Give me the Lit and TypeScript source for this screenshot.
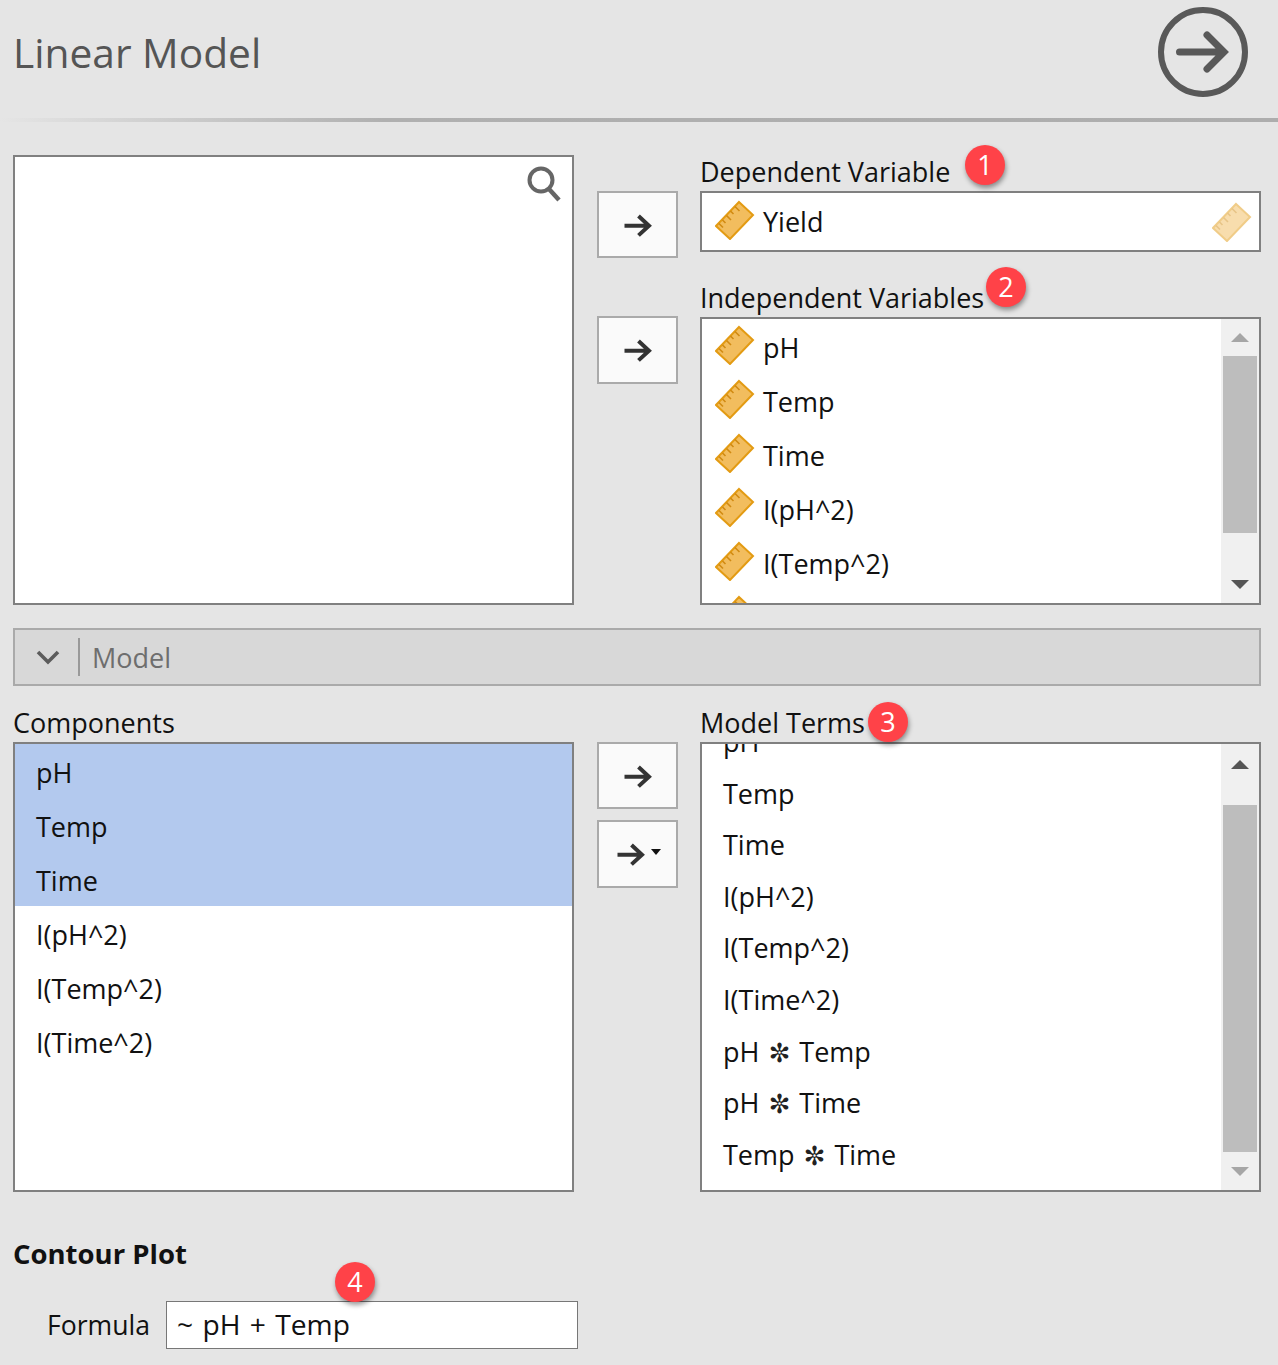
import { LitElement, css, html, svg } from 'lit';
import { customElement } from 'lit/decorators.js';

const ruler = (faded = false) => html`<svg class="ruler ${faded ? 'faded' : ''}" width="40" height="40" viewBox="0 0 40 40">
    ${svg`<path d="M24 2 L38 15 L15 39 L1 26 Z" fill="#f2bd5e" stroke="#e39b13" stroke-width="2" stroke-linejoin="miter"/>
    <path d="M20 6.5 L24.5 11 M15.5 11 L18.5 14 M11.5 15.5 L16 20 M7.5 20 L10.5 23 M4 23.5 L8 27.5" stroke="#d18a12" stroke-width="1.6" fill="none"/>`}
</svg>`;

const arrow = () => html`<svg width="30" height="24" viewBox="0 0 30 24">
    ${svg`<path d="M1.5 12.7 H26 M15.5 3 L26 12.7 L15.5 22.4" fill="none" stroke="#333" stroke-width="4" stroke-linejoin="miter"/>`}
</svg>`;

interface Bar {
    upH: number;
    gap: number;
    thumb: number;
    upDark: boolean;
}

@customElement('app-root')
export class AppRoot extends LitElement {
    static styles = css`
        :host {
            display: block;
            width: 1278px;
            height: 1365px;
            background: #e5e5e5;
            font-family: 'Open Sans', 'DejaVu Sans', sans-serif;
            font-size: 27px;
            color: #111;
            overflow: hidden;
        }

        .header {
            height: 118px;
            display: flex;
            align-items: center;
            justify-content: space-between;
            padding: 0 29px 14px 13px;
            box-sizing: border-box;
        }

        .title {
            font-size: 40.7px;
            color: #555;
        }

        .rule {
            height: 4px;
            background: linear-gradient(90deg, #e5e5e5 0, #b0b0b0 30%, #adadad 100%);
        }

        .grid {
            display: grid;
            grid-template-columns: 561px 126px 561px;
            padding-left: 13px;
        }

        .top {
            margin-top: 33px;
            height: 450px;
        }

        .box {
            background: #fff;
            border: 2px solid #808080;
            box-sizing: border-box;
            position: relative;
            overflow: hidden;
        }

        .tall {
            height: 450px;
        }

        .search {
            position: absolute;
            right: 10px;
            top: 8px;
        }

        .mid {
            padding-left: 23px;
            display: flex;
            flex-direction: column;
        }

        .btn {
            width: 81px;
            height: 67px;
            box-sizing: border-box;
            background: #fafafa;
            border: 2px solid #aaa;
            display: flex;
            align-items: center;
            justify-content: center;
        }

        .btn.second {
            height: 68px;
        }

        .btn .caret {
            width: 0;
            height: 0;
            border-left: 5px solid transparent;
            border-right: 5px solid transparent;
            border-top: 6px solid #111;
            margin: -4px -2px 0 5px;
        }

        .label {
            display: flex;
            align-items: flex-end;
            height: 36px;
            line-height: 36px;
            padding-bottom: 1px;
            box-sizing: border-box;
            position: relative;
        }

        .badge {
            position: absolute;
            width: 40px;
            height: 40px;
            border-radius: 50%;
            background: #ff4248;
            color: #fff;
            font-size: 27px;
            line-height: 39px;
            text-align: center;
            box-shadow: 1px 3px 5px rgba(0, 0, 0, 0.4);
            z-index: 2;
        }

        .single {
            height: 61px;
            display: flex;
            align-items: center;
            justify-content: space-between;
            padding: 0 7px 0 13px;
        }

        .row {
            display: flex;
            align-items: center;
            gap: 8px;
        }

        .row .ruler {
            margin-bottom: 4px;
        }

        .faded {
            opacity: 0.5;
        }

        .ind {
            height: 288px;
            display: flex;
        }

        .items {
            flex: 1;
            overflow: hidden;
        }

        .ind .items {
            padding: 1px 0 0 13px;
        }

        .ind .row {
            height: 54px;
            flex-shrink: 0;
        }

        .scroll {
            width: 38px;
            background: #f0f0f0;
            display: flex;
            flex-direction: column;
            align-items: center;
            flex-shrink: 0;
        }

        .up,
        .down {
            width: 100%;
            display: flex;
            align-items: center;
            justify-content: center;
            flex-shrink: 0;
        }

        .down {
            margin-top: auto;
            height: 38px;
        }

        .tri-up {
            border-left: 9px solid transparent;
            border-right: 9px solid transparent;
            border-bottom: 9px solid #a6a6a6;
        }

        .tri-down {
            border-left: 9px solid transparent;
            border-right: 9px solid transparent;
            border-top: 9px solid #a6a6a6;
        }

        .tri-up.dark {
            border-bottom-color: #555;
        }

        .tri-down.dark {
            border-top-color: #555;
        }

        .thumb {
            width: 34px;
            background: #bdbdbd;
            flex-shrink: 0;
        }

        .section {
            margin: 23px 17px 0 13px;
            height: 58px;
            box-sizing: border-box;
            background: #d8d8d8;
            border: 2px solid #aaa;
            display: flex;
            align-items: center;
            color: #6e6e6e;
        }

        .chev {
            margin-left: 21px;
        }

        .divider {
            width: 2px;
            height: 38px;
            background: #999;
            margin: 0 12px 0 18px;
        }

        .head56 {
            height: 56px;
        }

        .comp div {
            height: 54px;
            line-height: 54px;
            padding: 2px 0 0 21px;
            box-sizing: border-box;
        }

        .comp .sel {
            background: #b3c9ee;
        }

        .terms {
            display: flex;
        }

        .terms .items {
            padding-left: 21px;
        }

        .terms .items div {
            height: 51.6px;
            line-height: 51.6px;
        }

        .terms .items div:first-child {
            margin-top: -28px;
        }

        .star {
            font-family: 'DejaVu Sans', sans-serif;
            font-size: 26px;
            color: #222;
            padding: 0 2px;
        }

        .mt11 {
            margin-top: 11px;
        }

        .plot {
            padding: 43px 0 0 13px;
            font-size: 27.5px;
            font-weight: 700;
            line-height: 38px;
        }

        .formula {
            display: flex;
            align-items: center;
            margin: 28px 0 0 47px;
            position: relative;
        }

        .formula span {
            width: 119px;
            font-size: 26.6px;
        }

        .input {
            width: 412px;
            height: 48px;
            line-height: 44px;
            font-size: 28.2px;
            word-spacing: 2px;
            box-sizing: border-box;
            background: #fff;
            border: 1px solid #777;
            padding-left: 10px;
        }
    `;

    private scrollbar(b: Bar) {
        return html`<div class="scroll">
            <div class="up" style="height:${b.upH}px"><i class="tri-up ${b.upDark ? 'dark' : ''}"></i></div>
            <div class="thumb" style="margin-top:${b.gap}px;height:${b.thumb}px"></div>
            <div class="down"><i class="tri-down ${b.upDark ? '' : 'dark'}"></i></div>
        </div>`;
    }

    render() {
        const vars = ['pH', 'Temp', 'Time', 'I(pH^2)', 'I(Temp^2)', 'I(Time^2)'];
        const terms: string[][] = [
            ['pH'], ['Temp'], ['Time'], ['I(pH^2)'], ['I(Temp^2)'], ['I(Time^2)'],
            ['pH', 'Temp'], ['pH', 'Time'], ['Temp', 'Time'],
        ];
        return html`
            <div class="header">
                <div class="title">Linear Model</div>
                <svg width="92" height="92" viewBox="0 0 92 92">
                    ${svg`<circle cx="46" cy="46" r="42" fill="none" stroke="#595959" stroke-width="6"/>
                    <path d="M22.5 46 H65 M50 29 L67 46 L50 63" fill="none" stroke="#595959" stroke-width="7" stroke-linecap="round" stroke-linejoin="miter"/>`}
                </svg>
            </div>
            <div class="rule"></div>

            <div class="grid top">
                <div class="box tall">
                    <svg class="search" width="36" height="38" viewBox="0 0 36 38">
                        ${svg`<circle cx="15" cy="15" r="11.5" fill="none" stroke="#666" stroke-width="4"/>
                        <path d="M23 24 L33 35" stroke="#666" stroke-width="4.5"/>`}
                    </svg>
                </div>
                <div class="mid">
                    <div class="btn" style="margin-top:36px">${arrow()}</div>
                    <div class="btn second" style="margin-top:58px">${arrow()}</div>
                </div>
                <div>
                    <div class="label">Dependent Variable<span class="badge" style="left:265px;top:-10px">1</span></div>
                    <div class="box single">
                        <div class="row">${ruler()}<span>Yield</span></div>
                        ${ruler(true)}
                    </div>
                    <div class="label" style="margin-top:29px">Independent Variables<span class="badge" style="left:286px;top:-14px">2</span></div>
                    <div class="box ind">
                        <div class="items">
                            ${vars.map(v => html`<div class="row">${ruler()}<span>${v}</span></div>`)}
                        </div>
                        ${this.scrollbar({ upH: 37, gap: 0, thumb: 177, upDark: false })}
                    </div>
                </div>
            </div>

            <div class="section">
                <svg class="chev" width="24" height="16" viewBox="0 0 24 16">
                    ${svg`<path d="M2 3 L12 13 L22 3" fill="none" stroke="#5c5c5c" stroke-width="3.6"/>`}
                </svg>
                <div class="divider"></div>
                Model
            </div>

            <div class="grid">
                <div>
                    <div class="label head56">Components</div>
                    <div class="box tall comp">
                        ${vars.map((v, i) => html`<div class=${i < 3 ? 'sel' : ''}>${v}</div>`)}
                    </div>
                </div>
                <div class="mid" style="padding-top:56px">
                    <div class="btn">${arrow()}</div>
                    <div class="btn second mt11">${arrow()}<i class="caret"></i></div>
                </div>
                <div>
                    <div class="label head56">Model Terms<span class="badge" style="left:168px;top:16px">3</span></div>
                    <div class="box tall terms">
                        <div class="items">
                            ${terms.map(t => html`<div>${t.length === 1
                                ? t[0]
                                : html`${t[0]} <span class="star">✼</span> ${t[1]}`}</div>`)}
                        </div>
                        ${this.scrollbar({ upH: 40, gap: 21, thumb: 347, upDark: true })}
                    </div>
                </div>
            </div>

            <div class="plot">Contour Plot</div>
            <div class="formula">
                <span>Formula</span>
                <div class="input">~ pH + Temp</div>
                <i class="badge" style="left:288px;top:-39px;font-style:normal">4</i>
            </div>
        `;
    }
}
